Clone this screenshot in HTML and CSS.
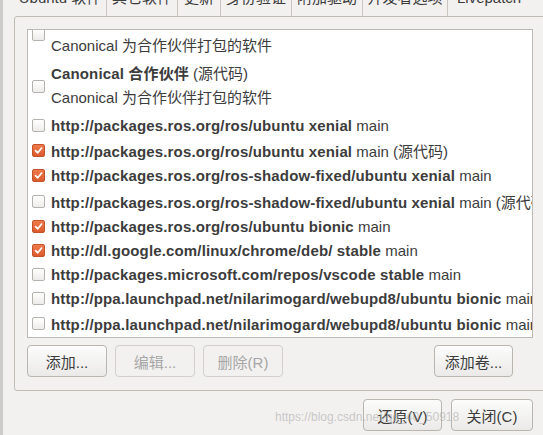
FILE: index.html
```html
<!DOCTYPE html>
<html lang="zh-CN">
<head>
    <meta charset="UTF-8">
    <meta name="viewport" content="width=device-width, initial-scale=1.0">
    <title>软件和更新</title>
    <link rel="stylesheet" href="styles.css">
</head>
<body>

<div class="window">
    <div class="tabs">
        <div class="tab tab-ubuntu">Ubuntu 软件</div>
        <div class="tab tab-other active">其它软件</div>
        <div class="tab tab-updates">更新</div>
        <div class="tab tab-auth">身份验证</div>
        <div class="tab tab-drivers">附加驱动</div>
        <div class="tab tab-dev">开发者选项</div>
        <div class="tab tab-live">Livepatch</div>
    </div>

    <div class="page">
        <div class="source-list">
            <div class="rows">
                <div class="row row-double">
                    <span class="check"></span>
                    <div class="label">
                        <div><b>Canonical 合作伙伴</b></div>
                        <div>Canonical 为合作伙伴打包的软件</div>
                    </div>
                </div>
                <div class="row row-double">
                    <span class="check"></span>
                    <div class="label">
                        <div><b>Canonical 合作伙伴</b> (源代码)</div>
                        <div>Canonical 为合作伙伴打包的软件</div>
                    </div>
                </div>
                <div class="row row-tall">
                    <span class="check"></span>
                    <div class="label"><b>http://packages.ros.org/ros/ubuntu xenial</b> main</div>
                </div>
                <div class="row">
                    <span class="check checked"><svg viewBox="0 0 13 13"><path d="M3 6.6 L5.6 9.2 L10.2 3.6"/></svg></span>
                    <div class="label"><b>http://packages.ros.org/ros/ubuntu xenial</b> main (源代码)</div>
                </div>
                <div class="row row-tall">
                    <span class="check checked"><svg viewBox="0 0 13 13"><path d="M3 6.6 L5.6 9.2 L10.2 3.6"/></svg></span>
                    <div class="label"><b>http://packages.ros.org/ros-shadow-fixed/ubuntu xenial</b> main</div>
                </div>
                <div class="row row-tall">
                    <span class="check"></span>
                    <div class="label"><b>http://packages.ros.org/ros-shadow-fixed/ubuntu xenial</b> main (源代码)</div>
                </div>
                <div class="row">
                    <span class="check checked"><svg viewBox="0 0 13 13"><path d="M3 6.6 L5.6 9.2 L10.2 3.6"/></svg></span>
                    <div class="label"><b>http://packages.ros.org/ros/ubuntu bionic</b> main</div>
                </div>
                <div class="row">
                    <span class="check checked"><svg viewBox="0 0 13 13"><path d="M3 6.6 L5.6 9.2 L10.2 3.6"/></svg></span>
                    <div class="label"><b>http://dl.google.com/linux/chrome/deb/ stable</b> main</div>
                </div>
                <div class="row">
                    <span class="check"></span>
                    <div class="label"><b>http://packages.microsoft.com/repos/vscode stable</b> main</div>
                </div>
                <div class="row">
                    <span class="check"></span>
                    <div class="label"><b>http://ppa.launchpad.net/nilarimogard/webupd8/ubuntu bionic</b> main</div>
                </div>
                <div class="row row-tall">
                    <span class="check"></span>
                    <div class="label"><b>http://ppa.launchpad.net/nilarimogard/webupd8/ubuntu bionic</b> main (源代码)</div>
                </div>
            </div>
        </div>

        <div class="list-buttons">
            <button class="btn">添加...</button>
            <button class="btn" disabled>编辑...</button>
            <button class="btn" disabled>删除(R)</button>
            <button class="btn btn-volume">添加卷...</button>
        </div>
    </div>

    <div class="actions">
        <button class="btn btn-revert">还原(V)</button>
        <button class="btn btn-close">关闭(C)</button>
    </div>

    <div class="watermark">https://blog.csdn.net/qq_40_50918</div>
</div>

</body>
</html>
```

FILE: styles.css
```css
body {
    margin: 0;
    width: 543px;
    height: 435px;
    overflow: hidden;
    background-color: #f2f1f0;
    font-family: "Liberation Sans", "Noto Sans CJK SC", sans-serif;
    font-size: 15px;
    color: #3c3c3c;
}
.window {
    position: relative;
    height: 435px;
    border-left: 3px solid #cdcccb;
}

/* notebook tabs, scrolled mostly out of view */
.tabs {
    display: flex;
    height: 16px;
    margin-left: 11px;
    overflow: hidden;
}
.tab {
    flex: none;
    box-sizing: border-box;
    height: 33px;
    margin-top: -17px;
    line-height: 30px;
    text-align: center;
    white-space: nowrap;
    border-right: 1px solid #c9c5bf;
}
.tab-ubuntu { width: 93px; }
.tab-other { width: 71px; }
.tab-updates { width: 43px; }
.tab-auth { width: 71px; }
.tab-drivers { width: 71px; }
.tab-dev { width: 85px; }
.tab-live {
    width: 90px;
    text-align: left;
    padding-left: 9px;
    border-right: none;
}

.page {
    width: 560px;
    margin-left: 11px;
    padding: 12px 12px 13px 12px;
    border: 1px solid #c0bcb6;
    border-radius: 3px 0 0 3px;
    box-sizing: border-box;
}
.source-list {
    box-sizing: border-box;
    width: 506px;
    height: 309px;
    background-color: #fff;
    border: 1px solid #bdb9b4;
    overflow: hidden;
}
.rows {
    margin-top: -22px;
}
.row {
    display: flex;
    align-items: center;
    gap: 5px;
    height: 24px;
    padding-left: 4px;
    white-space: nowrap;
}
.row-tall {
    height: 26px;
}
.row-double {
    height: 52px;
}
.row-double .label div {
    line-height: 24px;
}
.label b {
    font-weight: bold;
    letter-spacing: 0.15px;
}

.check {
    flex: none;
    box-sizing: border-box;
    width: 13px;
    height: 13px;
    margin-right: 1px;
    border: 1px solid #b5b2ad;
    border-radius: 2px;
    background: linear-gradient(#ffffff, #edecea);
}
.check.checked {
    border-color: #c4522a;
    background: linear-gradient(#ee7a4c, #dc5a2c);
}
.check svg {
    display: block;
    width: 11px;
    height: 11px;
}
.check path {
    fill: none;
    stroke: #fff;
    stroke-width: 2;
    stroke-linecap: round;
    stroke-linejoin: round;
}

.list-buttons {
    display: flex;
    gap: 8px;
    width: 506px;
    margin-top: 7px;
}
.btn {
    flex: none;
    box-sizing: border-box;
    width: 80px;
    height: 32px;
    padding: 0;
    border: 1px solid #b9b5af;
    border-radius: 4px;
    background: linear-gradient(#fcfcfc, #ebeae8);
    font-family: inherit;
    font-size: 15px;
    color: #3c3c3c;
}
.btn:disabled {
    background: #f2f1f0;
    border-color: #d3d0cb;
    color: #a6a6a6;
}
.btn-volume {
    width: 79px;
    margin-left: auto;
    margin-right: 20px;
}

.actions {
    display: flex;
    justify-content: flex-end;
    gap: 9px;
    margin-top: 8px;
    padding-right: 10px;
}
.btn-revert {
    width: 79px;
}
.btn-close {
    width: 82px;
}

.watermark {
    position: absolute;
    left: 272px;
    top: 409px;
    font-size: 12px;
    line-height: 16px;
    color: rgba(170, 170, 170, 0.6);
    white-space: nowrap;
}
```
